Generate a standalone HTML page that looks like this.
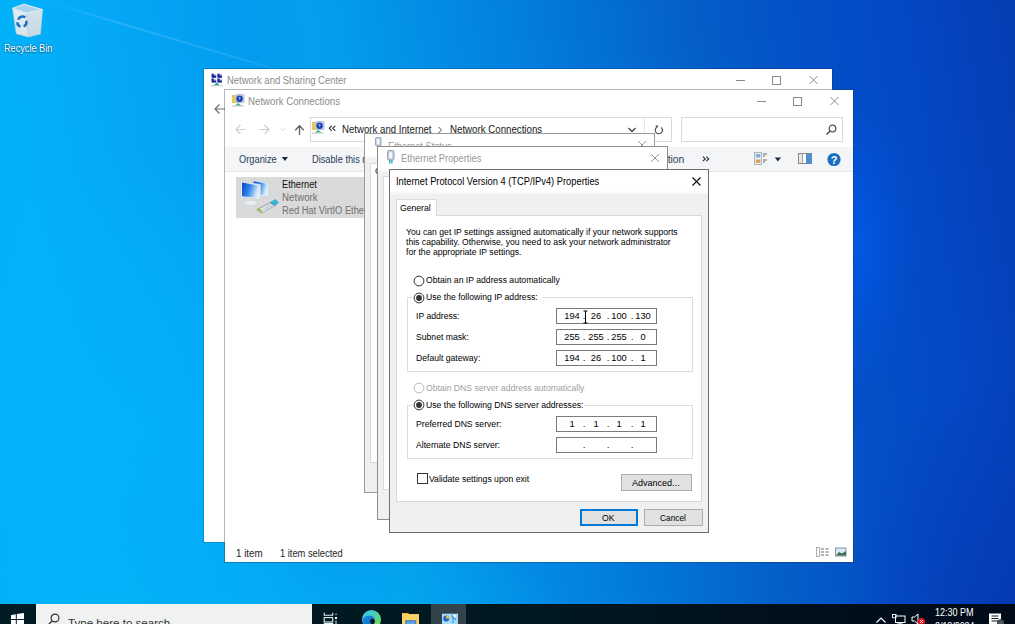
<!DOCTYPE html>
<html><head><meta charset="utf-8"><style>
html,body{margin:0;padding:0;}
body{width:1015px;height:624px;overflow:hidden;position:relative;background:radial-gradient(ellipse 200px 280px at 140px 430px, rgba(2,180,250,0.7) 0%, rgba(2,180,250,0.35) 60%, rgba(2,180,250,0) 100%),radial-gradient(ellipse 360px 110px at 220px 624px, rgba(4,178,246,0.75) 0%, rgba(4,178,246,0) 100%),radial-gradient(ellipse 180px 260px at 1015px 624px, rgba(4,52,170,0.7) 0%, rgba(4,52,170,0) 100%),radial-gradient(ellipse 70px 150px at 845px 245px, rgba(0,95,245,0.75) 0%, rgba(0,90,240,0.35) 50%, rgba(0,90,240,0) 100%),linear-gradient(81deg, #02b0f8 0%, #03b1f8 9%, #05aaf7 16%, #039bee 31%, #049fec 37%, #0281e0 54%, #045ec8 71%, #0450c8 80%, #0448c6 89%, #043fb6 98%);font-family:"Liberation Sans",sans-serif;}
.t{position:absolute;white-space:nowrap;line-height:1;transform-origin:0 0;}
svg{overflow:hidden}
</style></head><body>
<div style="position:absolute;left:45px;top:0px;width:300px;height:1.6px;transform-origin:0 0;transform:rotate(16.5deg);background:linear-gradient(90deg, rgba(255,255,255,0) 0%, rgba(255,255,255,0.13) 25%, rgba(255,255,255,0.10) 70%, rgba(255,255,255,0) 100%);"></div>
<svg style="position:absolute;left:8px;top:0px;" width="40" height="40" viewBox="0 0 40 40">
<defs><linearGradient id="rbl" x1="0" y1="0" x2="0" y2="1"><stop offset="0" stop-color="#e3eef3"/><stop offset="0.75" stop-color="#d9e7ee"/><stop offset="1" stop-color="#e6dde3"/></linearGradient>
<linearGradient id="rbr" x1="0" y1="0" x2="0" y2="1"><stop offset="0" stop-color="#d3e2ea"/><stop offset="1" stop-color="#c8d9e2"/></linearGradient></defs>
<path d="M4.5 8.3 L18.6 13.1 L20.5 36.9 L8.3 33.7Z" fill="url(#rbl)" stroke="#b9d3df" stroke-width="0.6"/>
<path d="M18.6 13.1 L34.6 9.6 L32.4 34 L20.5 36.9Z" fill="url(#rbr)" stroke="#b9d3df" stroke-width="0.6"/>
<path d="M4.5 8.3 L16 4.2 L34.6 9.6 L18.6 13.1Z" fill="#a9d2ea" stroke="#e2f1f8" stroke-width="1"/>
<g fill="none" stroke="#1f6fc6" stroke-width="2.6">
<path d="M10.2 19.6 A4.6 4.6 0 0 1 17.2 17.4"/><path d="M18.2 20.8 A4.6 4.6 0 0 1 15.6 26.4"/><path d="M12.4 26.6 A4.6 4.6 0 0 1 9.4 22.2"/>
</g></svg>
<div class="t" style="left:3.6999999999999997px;top:43px;font-size:10.5px;color:#fff;transform:scaleX(0.8722);text-shadow:0 0 2px rgba(0,0,0,.5),0 1px 1px rgba(0,0,0,.3);">Recycle Bin</div>
<div style="position:absolute;left:203px;top:68px;width:630px;height:475px;box-sizing:border-box;background:#fff;background-clip:padding-box;border:1px solid rgba(0,30,70,0.22);"></div>
<div class="t" style="left:227.4px;top:76px;font-size:10px;color:#8c8c8c;transform:scaleX(0.9471);">Network and Sharing Center</div>
<svg style="position:absolute;left:211px;top:73px;" width="13" height="14" viewBox="0 0 13 14">
<g><rect x="0.6" y="0.8" width="4.6" height="4" fill="#c9cff0"/><path d="M0.6 0.8 H2.8 V2.6 H5.2 V4.8 H0.6Z" fill="#1a2490"/></g>
<g><rect x="6.4" y="0.8" width="4.6" height="4" fill="#c9cff0"/><path d="M6.4 0.8 H8.6 V2.6 H11 V4.8 H6.4Z" fill="#1a2490"/></g>
<g><rect x="0.6" y="5.6" width="4.6" height="4" fill="#c9cff0"/><path d="M0.6 5.6 H2.8 V7.4 H5.2 V9.6 H0.6Z" fill="#1a2490"/></g>
<g><rect x="6.4" y="5.6" width="4.6" height="4" fill="#c9cff0"/><path d="M6.4 5.6 H8.6 V7.4 H11 V9.6 H6.4Z" fill="#1a2490"/></g>
<path d="M5 9.8 L6.6 9.8 L6.6 10.6 L9.2 12.3 L2.4 12.3 L5 10.6Z" fill="#1fb07a"/>
<rect x="0" y="12.2" width="12" height="1" fill="#c4c4c4"/></svg>
<svg style="position:absolute;left:213px;top:103px;" width="12" height="12" viewBox="0 0 12 12"><path d="M2 6 H12 M6.5 1.5 L2 6 L6.5 10.5" fill="none" stroke="#6f6f6f" stroke-width="1.2"/></svg>
<div style="position:absolute;left:224px;top:89px;width:630px;height:474px;box-sizing:border-box;background:#fff;background-clip:padding-box;border:1px solid rgba(40,40,40,0.34);"></div>
<div class="t" style="left:248.4px;top:97px;font-size:10px;color:#8c8c8c;transform:scaleX(0.9681);">Network Connections</div>
<svg style="position:absolute;left:231px;top:94px;" width="14" height="13" viewBox="0 0 14 13">
<rect x="1" y="1" width="6" height="8" fill="#f2d77c"/><rect x="1" y="1" width="3" height="8" fill="#e8c65a"/>
<rect x="5" y="0.5" width="8" height="8" rx="1" fill="#c9d6ee" stroke="#8aa0c8" stroke-width="0.6"/>
<circle cx="8.6" cy="4.8" r="3.2" fill="#1c3ea6"/><path d="M7.2 3 Q9 2.2 10 4 Q8.5 4.5 9 6.5 Q7.5 6 7.2 3Z" fill="#6fa0f0"/>
<path d="M6.5 9.2 L8 9.2 L8 10 L11 11.6 L3.5 11.6 L6.5 10Z" fill="#1fa86a"/>
<rect x="1" y="11.6" width="12" height="0.9" fill="#c0c0c0"/></svg>
<svg style="position:absolute;left:733px;top:74px;" width="90" height="12" viewBox="0 0 90 12"><path d="M3 6.5 H12" stroke="#8a8a8a" stroke-width="1"/>
<rect x="39.5" y="2.5" width="8" height="8" fill="none" stroke="#8a8a8a" stroke-width="1"/>
<path d="M76.5 2 L84.5 10 M84.5 2 L76.5 10" stroke="#8a8a8a" stroke-width="1"/></svg>
<svg style="position:absolute;left:754px;top:95px;" width="90" height="12" viewBox="0 0 90 12"><path d="M3 6.5 H12" stroke="#8a8a8a" stroke-width="1"/>
<rect x="39.5" y="2.5" width="8" height="8" fill="none" stroke="#8a8a8a" stroke-width="1"/>
<path d="M76.5 2 L84.5 10 M84.5 2 L76.5 10" stroke="#8a8a8a" stroke-width="1"/></svg>
<svg style="position:absolute;left:234px;top:123px;" width="74" height="14" viewBox="0 0 74 14">
<path d="M2 6.5 H11.5 M6.5 2 L2 6.5 L6.5 11" fill="none" stroke="#cfcfcf" stroke-width="1.2"/>
<path d="M25.5 6.5 H35 M30.5 2 L35 6.5 L30.5 11" fill="none" stroke="#cfcfcf" stroke-width="1.2"/>
<path d="M46.5 5.5 L49 7.5 L51.5 5.5" fill="none" stroke="#d8d8d8" stroke-width="1"/>
<path d="M65.5 12 V3 M61.2 7.2 L65.5 2.8 L69.8 7.2" fill="none" stroke="#5f5f5f" stroke-width="1.3"/></svg>
<div style="position:absolute;left:310px;top:117px;width:362px;height:25px;box-sizing:border-box;border:1px solid #dadada;"></div>
<div style="position:absolute;left:644px;top:118px;width:1px;height:23px;box-sizing:border-box;background:#e6e6e6;"></div>
<svg style="position:absolute;left:311px;top:121px;" width="14" height="14" viewBox="0 0 14 14">
<rect x="1" y="1" width="6" height="8" fill="#f2d77c"/><rect x="1" y="1" width="3" height="8" fill="#e8c65a"/>
<rect x="5" y="0.5" width="8" height="8" rx="1" fill="#c9d6ee" stroke="#8aa0c8" stroke-width="0.6"/>
<circle cx="8.6" cy="4.8" r="3.2" fill="#1c3ea6"/><path d="M7.2 3 Q9 2.2 10 4 Q8.5 4.5 9 6.5 Q7.5 6 7.2 3Z" fill="#6fa0f0"/>
<path d="M6.5 9.2 L8 9.2 L8 10 L11 11.6 L3.5 11.6 L6.5 10Z" fill="#1fa86a"/>
<rect x="1" y="11.6" width="12" height="0.9" fill="#c0c0c0"/></svg>
<svg style="position:absolute;left:328px;top:125px;" width="9" height="7" viewBox="0 0 9 7"><path d="M3.8 0.8 L1.3 3.3 L3.8 5.8 M7.3 0.8 L4.8 3.3 L7.3 5.8" fill="none" stroke="#2a2a2a" stroke-width="1.1"/></svg>
<div class="t" style="left:341.59999999999997px;top:124px;font-size:10.5px;color:#1a1a1a;transform:scaleX(0.9186);">Network and Internet</div>
<svg style="position:absolute;left:436px;top:126px;" width="8" height="8" viewBox="0 0 8 8"><path d="M2.5 1 L5.5 4 L2.5 7" fill="none" stroke="#555" stroke-width="1"/></svg>
<div class="t" style="left:450.0px;top:124px;font-size:10.5px;color:#1a1a1a;transform:scaleX(0.9232);">Network Connections</div>
<svg style="position:absolute;left:627px;top:126px;" width="10" height="8" viewBox="0 0 10 8"><path d="M1.5 2 L5 5.5 L8.5 2" fill="none" stroke="#444" stroke-width="1.3"/></svg>
<svg style="position:absolute;left:654px;top:125px;" width="10" height="10" viewBox="0 0 10 10"><path d="M7.2 2.4 A3.6 3.6 0 1 1 2.6 2.3" fill="none" stroke="#555" stroke-width="1.2"/><path d="M1.5 0.3 L4.6 0.8 L2.8 3.6Z" fill="#555"/></svg>
<div style="position:absolute;left:681px;top:117px;width:162px;height:25px;box-sizing:border-box;border:1px solid #dadada;"></div>
<svg style="position:absolute;left:824px;top:123px;" width="14" height="14" viewBox="0 0 14 14"><circle cx="8.5" cy="5.5" r="3.3" fill="none" stroke="#555" stroke-width="1.3"/><path d="M6 8 L2.5 11.5" stroke="#555" stroke-width="1.6"/></svg>
<div style="position:absolute;left:225px;top:147px;width:628px;height:25px;box-sizing:border-box;background:#f3f5f7;border-bottom:1px solid #e8ebee;"></div>
<div class="t" style="left:239.4px;top:154px;font-size:10.5px;color:#2c3b56;transform:scaleX(0.8857);">Organize</div>
<svg style="position:absolute;left:281px;top:156px;" width="8" height="6" viewBox="0 0 8 6"><path d="M0.8 1 L7 1 L3.9 5Z" fill="#1e2a44"/></svg>
<div class="t" style="left:312.4px;top:154px;font-size:10.5px;color:#2c3b56;transform:scaleX(0.88);">Disable this network device</div>
<div class="t" style="left:569.4px;top:154px;font-size:10.5px;color:#2c3b56;transform:scaleX(0.9828);">Diagnose this connection</div>
<svg style="position:absolute;left:702px;top:156px;" width="8" height="6" viewBox="0 0 8 6"><path d="M0.9 0.6 L3.2 2.9 L0.9 5.2 M4.4 0.6 L6.7 2.9 L4.4 5.2" fill="none" stroke="#2a2f3a" stroke-width="1.2"/></svg>
<svg style="position:absolute;left:754px;top:152px;" width="14" height="14" viewBox="0 0 14 14"><rect x="0.5" y="0.5" width="7" height="12" fill="#eef2f5" stroke="#9aa2a8" stroke-width="0.8"/>
<rect x="1.8" y="2" width="4.5" height="3.5" fill="#7fb2d8"/><rect x="1.8" y="7.5" width="4.5" height="3.5" fill="#d9a35a"/>
<path d="M9 2 H13 M9 4 H11 M9 8 H13 M9 10 H11" stroke="#555" stroke-width="0.9"/></svg>
<svg style="position:absolute;left:774px;top:157px;" width="8" height="5" viewBox="0 0 8 5"><path d="M0.8 0.5 L7 0.5 L3.9 4.5Z" fill="#1e2a44"/></svg>
<svg style="position:absolute;left:798px;top:153px;" width="15" height="12" viewBox="0 0 15 12"><rect x="0.5" y="0.5" width="13" height="10" fill="#fff" stroke="#888" stroke-width="1"/>
<rect x="1" y="1" width="3" height="9" fill="#e8e8e8"/><rect x="8" y="1" width="5.5" height="9.5" fill="#4a90d9"/><path d="M4.5 1 V10" stroke="#888" stroke-width="0.8"/></svg>
<svg style="position:absolute;left:827px;top:152px;" width="15" height="15" viewBox="0 0 15 15"><circle cx="7" cy="7.5" r="6.6" fill="#1a6fc0"/><text x="7" y="11.6" text-anchor="middle" font-family="Liberation Sans" font-weight="bold" font-size="11" fill="#fff">?</text></svg>
<div style="position:absolute;left:236px;top:177px;width:140px;height:41px;box-sizing:border-box;background:#dadada;"></div>
<svg style="position:absolute;left:239px;top:178px;" width="40" height="38" viewBox="0 0 40 38">
<defs><linearGradient id="sc" x1="0" x2="1" y1="0" y2="0.3"><stop offset="0" stop-color="#0a3fc4"/><stop offset="0.5" stop-color="#2f86ea"/><stop offset="1" stop-color="#d6ecfc"/></linearGradient>
<linearGradient id="pl" x1="0" x2="1" y1="1" y2="0"><stop offset="0" stop-color="#f4f6f7"/><stop offset="1" stop-color="#c9d2d8"/></linearGradient></defs>
<path d="M13 1.5 L30 4.5 L30 19 L13 17Z" fill="#e6ebef" stroke="#c0c9d0" stroke-width="0.6"/>
<path d="M14.5 3.2 L28.5 5.8 L28.5 17.5 L14.5 15.8Z" fill="url(#sc)"/>
<path d="M1.5 3 L21.5 6.5 L21.5 21.5 L1.5 19.5Z" fill="#e9eef1" stroke="#c3ccd3" stroke-width="0.6"/>
<path d="M3 4.6 L20 7.6 L20 20 L3 18.2Z" fill="url(#sc)"/>
<path d="M9 21 L14 21.5 L15 24 L8 23.5Z" fill="#dfe4e7"/>
<ellipse cx="11.5" cy="25" rx="7" ry="2.6" fill="#e9edef" stroke="#c9cfd3" stroke-width="0.6"/>
<path d="M17.5 31.5 L31 24.5 L36 27.5 L22.5 35Z" fill="url(#pl)" stroke="#8e99a0" stroke-width="0.7"/>
<path d="M20 31 L30 25.8 M22 32.8 L32.5 27.2" stroke="#a9b3b9" stroke-width="0.6"/>
<path d="M31 24.5 L36.5 21.5 L39.5 24.5 L36 27.5Z" fill="#35b4dc" stroke="#2a8fb5" stroke-width="0.5"/>
<path d="M17.5 31.5 L20.5 30 L23.5 33.8 L22.5 35Z" fill="#9cc34f"/></svg>
<div class="t" style="left:282.29999999999995px;top:180px;font-size:10px;color:#111;transform:scaleX(0.9216);">Ethernet</div>
<div class="t" style="left:282.29999999999995px;top:193px;font-size:10px;color:#707070;transform:scaleX(0.9722);">Network</div>
<div class="t" style="left:282.29999999999995px;top:206px;font-size:10px;color:#707070;transform:scaleX(0.93);">Red Hat VirtIO Ethernet Adapter</div>
<div class="t" style="left:236.4px;top:548px;font-size:10.5px;color:#1e1e1e;transform:scaleX(0.9329);">1 item</div>
<div class="t" style="left:280.4px;top:548px;font-size:10.5px;color:#1e1e1e;transform:scaleX(0.887);">1 item selected</div>
<svg style="position:absolute;left:815px;top:546px;" width="32" height="12" viewBox="0 0 32 12"><rect x="1.5" y="1.5" width="3" height="9" fill="none" stroke="#999" stroke-width="0.8"/>
<path d="M6 3 H9 M10.5 3 H13.5 M6 6 H9 M10.5 6 H13.5 M6 9 H9 M10.5 9 H13.5" stroke="#666" stroke-width="1"/>
<rect x="20.5" y="2" width="10.5" height="8" fill="#d8e8f6" stroke="#7a8ea0" stroke-width="0.9"/>
<path d="M21 9.5 L24 6 L27 7.5 L31 5 V9.5Z" fill="#3f6f50"/></svg>
<div style="position:absolute;left:364px;top:133px;width:291px;height:360px;box-sizing:border-box;background:#f0f0f0;border:1px solid #9a9a9a;"></div>
<div style="position:absolute;left:365px;top:134px;width:289px;height:25px;box-sizing:border-box;background:linear-gradient(#fff 0, #fff 22px, #f0f0f0 100%);"></div>
<div style="position:absolute;left:370px;top:179px;width:279px;height:284px;box-sizing:border-box;background:#fff;border:1px solid #d9d9d9;"></div>
<div style="position:absolute;left:370px;top:163px;width:42px;height:17px;box-sizing:border-box;background:#fff;border:1px solid #d9d9d9;border-bottom:none;"></div>
<div class="t" style="left:375.4px;top:166px;font-size:9.6px;color:#000;transform:scaleX(0.9);">General</div>
<svg style="position:absolute;left:374px;top:137px;" width="9" height="12" viewBox="0 0 9 12"><rect x="1.5" y="0.5" width="5.5" height="8.5" rx="1.2" fill="#c8d4e0" stroke="#7f90a4" stroke-width="0.8"/><rect x="3.2" y="2" width="2" height="5" fill="#fff"/><rect x="3" y="9" width="3" height="3" fill="#3a8ab8"/></svg>
<div class="t" style="left:388.4px;top:141px;font-size:10.5px;color:#999;transform:scaleX(0.88);">Ethernet Status</div>
<svg style="position:absolute;left:637px;top:140px;" width="10" height="10" viewBox="0 0 10 10"><path d="M1 1 L9 9 M9 1 L1 9" stroke="#999" stroke-width="1"/></svg>
<div style="position:absolute;left:377px;top:146px;width:291px;height:374px;box-sizing:border-box;background:#f0f0f0;border:1px solid #8e8e8e;"></div>
<div style="position:absolute;left:378px;top:147px;width:289px;height:25px;box-sizing:border-box;background:linear-gradient(#fff 0, #fff 22px, #f0f0f0 100%);"></div>
<div style="position:absolute;left:383px;top:192px;width:279px;height:298px;box-sizing:border-box;background:#fff;border:1px solid #d9d9d9;"></div>
<div style="position:absolute;left:383px;top:176px;width:42px;height:17px;box-sizing:border-box;background:#fff;border:1px solid #d9d9d9;border-bottom:none;"></div>
<svg style="position:absolute;left:386px;top:150px;" width="10" height="14" viewBox="0 0 10 14"><rect x="1.5" y="0.5" width="6.5" height="9.5" rx="1.5" fill="#c8d4e0" stroke="#7f90a4" stroke-width="0.8"/><rect x="3.6" y="2.2" width="2.2" height="6" fill="#fff"/><rect x="3" y="10" width="1.4" height="3.5" fill="#29a9c8"/><rect x="5.2" y="10" width="1.4" height="3.5" fill="#29a9c8"/></svg>
<div class="t" style="left:400.79999999999995px;top:153px;font-size:10.5px;color:#999;transform:scaleX(0.8877);">Ethernet Properties</div>
<svg style="position:absolute;left:650px;top:153px;" width="10" height="10" viewBox="0 0 10 10"><path d="M1 1 L9 9 M9 1 L1 9" stroke="#999" stroke-width="1"/></svg>
<div style="position:absolute;left:389px;top:169px;width:320px;height:364px;box-sizing:border-box;background:#f0f0f0;border:1px solid #6e6e6e;"></div>
<div style="position:absolute;left:390px;top:170px;width:318px;height:25px;box-sizing:border-box;background:linear-gradient(#fff 0, #fff 21px, #f0f0f0 100%);"></div>
<div class="t" style="left:396.4px;top:176px;font-size:10.5px;color:#000;transform:scaleX(0.886);">Internet Protocol Version 4 (TCP/IPv4) Properties</div>
<svg style="position:absolute;left:691px;top:176px;" width="11" height="11" viewBox="0 0 11 11"><path d="M1.5 1.5 L9.5 9.5 M9.5 1.5 L1.5 9.5" stroke="#111" stroke-width="1.1"/></svg>
<div style="position:absolute;left:396px;top:215px;width:306px;height:287px;box-sizing:border-box;background:#fff;border:1px solid #d9d9d9;"></div>
<div style="position:absolute;left:396px;top:199px;width:41px;height:17px;box-sizing:border-box;background:#fff;border:1px solid #d9d9d9;border-bottom:none;"></div>
<div class="t" style="left:400.4px;top:203px;font-size:9.6px;color:#000;transform:scaleX(0.9);">General</div>
<div class="t" style="left:406.4px;top:227px;font-size:9.6px;color:#000;transform:scaleX(0.9);">You can get IP settings assigned automatically if your network supports</div>
<div class="t" style="left:406.4px;top:237px;font-size:9.6px;color:#000;transform:scaleX(0.9);">this capability. Otherwise, you need to ask your network administrator</div>
<div class="t" style="left:406.4px;top:247px;font-size:9.6px;color:#000;transform:scaleX(0.9);">for the appropriate IP settings.</div>
<div style="position:absolute;left:407px;top:297px;width:286px;height:75px;box-sizing:border-box;border:1px solid #dcdcdc;"></div>
<div style="position:absolute;left:407px;top:405px;width:286px;height:54px;box-sizing:border-box;border:1px solid #dcdcdc;"></div>
<div style="position:absolute;left:412px;top:292px;width:130px;height:10px;box-sizing:border-box;background:#fff;"></div>
<div style="position:absolute;left:412px;top:400px;width:172px;height:10px;box-sizing:border-box;background:#fff;"></div>
<svg style="position:absolute;left:413px;top:274.5px;" width="12" height="12" viewBox="0 0 12 12"><circle cx="6" cy="6" r="4.9" fill="#fff" stroke="#333" stroke-width="1"/></svg>
<svg style="position:absolute;left:413px;top:291.5px;" width="12" height="12" viewBox="0 0 12 12"><circle cx="6" cy="6" r="4.9" fill="#fff" stroke="#333" stroke-width="1"/><circle cx="6" cy="6" r="2.9" fill="#333"/></svg>
<svg style="position:absolute;left:413px;top:382px;" width="12" height="12" viewBox="0 0 12 12"><circle cx="6" cy="6" r="4.9" fill="#fff" stroke="#bcbcbc" stroke-width="1"/></svg>
<svg style="position:absolute;left:413px;top:399px;" width="12" height="12" viewBox="0 0 12 12"><circle cx="6" cy="6" r="4.9" fill="#fff" stroke="#333" stroke-width="1"/><circle cx="6" cy="6" r="2.9" fill="#333"/></svg>
<div class="t" style="left:426.4px;top:275px;font-size:9.6px;color:#000;transform:scaleX(0.9);">Obtain an IP address automatically</div>
<div class="t" style="left:426.4px;top:292px;font-size:9.6px;color:#000;transform:scaleX(0.9);">Use the following IP address:</div>
<div class="t" style="left:416.4px;top:311px;font-size:9.6px;color:#000;transform:scaleX(0.9);">IP address:</div>
<div class="t" style="left:416.4px;top:332px;font-size:9.6px;color:#000;transform:scaleX(0.9);">Subnet mask:</div>
<div class="t" style="left:416.4px;top:353px;font-size:9.6px;color:#000;transform:scaleX(0.9);">Default gateway:</div>
<div class="t" style="left:426.4px;top:383px;font-size:9.6px;color:#a0a0a0;transform:scaleX(0.9);">Obtain DNS server address automatically</div>
<div class="t" style="left:426.4px;top:400px;font-size:9.6px;color:#000;transform:scaleX(0.9);">Use the following DNS server addresses:</div>
<div class="t" style="left:416.4px;top:419px;font-size:9.6px;color:#000;transform:scaleX(0.9);">Preferred DNS server:</div>
<div class="t" style="left:416.4px;top:440px;font-size:9.6px;color:#000;transform:scaleX(0.9);">Alternate DNS server:</div>
<div style="position:absolute;left:417px;top:473px;width:11px;height:11px;box-sizing:border-box;background:#fff;border:1px solid #333;"></div>
<div class="t" style="left:429.4px;top:474px;font-size:9.6px;color:#000;transform:scaleX(0.9);">Validate settings upon exit</div>
<div style="position:absolute;left:556px;top:308px;width:101px;height:16px;box-sizing:border-box;background:#fff;border:1px solid #7a7a7a;"></div>
<div class="t" style="left:557.2px;width:30px;text-align:center;top:311px;font-size:9.6px;transform-origin:50% 0;transform:scaleX(0.97)">194</div>
<div class="t" style="left:582.8000000000001px;top:311px;font-size:9.6px;">.</div>
<div class="t" style="left:580.8000000000001px;width:30px;text-align:center;top:311px;font-size:9.6px;transform-origin:50% 0;transform:scaleX(0.97)">26</div>
<div class="t" style="left:606.8000000000001px;top:311px;font-size:9.6px;">.</div>
<div class="t" style="left:604.2px;width:30px;text-align:center;top:311px;font-size:9.6px;transform-origin:50% 0;transform:scaleX(0.97)">100</div>
<div class="t" style="left:630.8000000000001px;top:311px;font-size:9.6px;">.</div>
<div class="t" style="left:628.0px;width:30px;text-align:center;top:311px;font-size:9.6px;transform-origin:50% 0;transform:scaleX(0.97)">130</div>
<div style="position:absolute;left:556px;top:329px;width:101px;height:16px;box-sizing:border-box;background:#fff;border:1px solid #7a7a7a;"></div>
<div class="t" style="left:557.2px;width:30px;text-align:center;top:332px;font-size:9.6px;transform-origin:50% 0;transform:scaleX(0.97)">255</div>
<div class="t" style="left:582.8000000000001px;top:332px;font-size:9.6px;">.</div>
<div class="t" style="left:580.8000000000001px;width:30px;text-align:center;top:332px;font-size:9.6px;transform-origin:50% 0;transform:scaleX(0.97)">255</div>
<div class="t" style="left:606.8000000000001px;top:332px;font-size:9.6px;">.</div>
<div class="t" style="left:604.2px;width:30px;text-align:center;top:332px;font-size:9.6px;transform-origin:50% 0;transform:scaleX(0.97)">255</div>
<div class="t" style="left:630.8000000000001px;top:332px;font-size:9.6px;">.</div>
<div class="t" style="left:628.0px;width:30px;text-align:center;top:332px;font-size:9.6px;transform-origin:50% 0;transform:scaleX(0.97)">0</div>
<div style="position:absolute;left:556px;top:350px;width:101px;height:16px;box-sizing:border-box;background:#fff;border:1px solid #7a7a7a;"></div>
<div class="t" style="left:557.2px;width:30px;text-align:center;top:353px;font-size:9.6px;transform-origin:50% 0;transform:scaleX(0.97)">194</div>
<div class="t" style="left:582.8000000000001px;top:353px;font-size:9.6px;">.</div>
<div class="t" style="left:580.8000000000001px;width:30px;text-align:center;top:353px;font-size:9.6px;transform-origin:50% 0;transform:scaleX(0.97)">26</div>
<div class="t" style="left:606.8000000000001px;top:353px;font-size:9.6px;">.</div>
<div class="t" style="left:604.2px;width:30px;text-align:center;top:353px;font-size:9.6px;transform-origin:50% 0;transform:scaleX(0.97)">100</div>
<div class="t" style="left:630.8000000000001px;top:353px;font-size:9.6px;">.</div>
<div class="t" style="left:628.0px;width:30px;text-align:center;top:353px;font-size:9.6px;transform-origin:50% 0;transform:scaleX(0.97)">1</div>
<div style="position:absolute;left:556px;top:416px;width:101px;height:16px;box-sizing:border-box;background:#fff;border:1px solid #7a7a7a;"></div>
<div class="t" style="left:557.2px;width:30px;text-align:center;top:419px;font-size:9.6px;transform-origin:50% 0;transform:scaleX(0.97)">1</div>
<div class="t" style="left:582.8000000000001px;top:419px;font-size:9.6px;">.</div>
<div class="t" style="left:580.8000000000001px;width:30px;text-align:center;top:419px;font-size:9.6px;transform-origin:50% 0;transform:scaleX(0.97)">1</div>
<div class="t" style="left:606.8000000000001px;top:419px;font-size:9.6px;">.</div>
<div class="t" style="left:604.2px;width:30px;text-align:center;top:419px;font-size:9.6px;transform-origin:50% 0;transform:scaleX(0.97)">1</div>
<div class="t" style="left:630.8000000000001px;top:419px;font-size:9.6px;">.</div>
<div class="t" style="left:628.0px;width:30px;text-align:center;top:419px;font-size:9.6px;transform-origin:50% 0;transform:scaleX(0.97)">1</div>
<div style="position:absolute;left:556px;top:437px;width:101px;height:16px;box-sizing:border-box;background:#fff;border:1px solid #7a7a7a;"></div>
<div class="t" style="left:582.8000000000001px;top:440px;font-size:9.6px;">.</div>
<div class="t" style="left:606.8000000000001px;top:440px;font-size:9.6px;">.</div>
<div class="t" style="left:630.8000000000001px;top:440px;font-size:9.6px;">.</div>
<svg style="position:absolute;left:582px;top:310px;" width="7" height="14" viewBox="0 0 7 14"><path d="M1.5 1 H5.5 M3.5 1 V13 M1.5 13 H5.5" stroke="#000" stroke-width="1"/></svg>
<div style="position:absolute;left:621px;top:474px;width:71px;height:17px;box-sizing:border-box;background:#e1e1e1;border:1px solid #adadad;"></div>
<div class="t" style="left:631.6999999999999px;top:478px;font-size:9.6px;color:#000;transform:scaleX(0.94);">Advanced...</div>
<div style="position:absolute;left:580px;top:509px;width:58px;height:17px;box-sizing:border-box;background:#e1e1e1;border:1px solid #0078d7;box-shadow:inset 0 0 0 1px #0078d7;"></div>
<div class="t" style="left:601.6999999999999px;top:513px;font-size:9.6px;color:#000;transform:scaleX(0.9);">OK</div>
<div style="position:absolute;left:644px;top:509px;width:59px;height:17px;box-sizing:border-box;background:#e1e1e1;border:1px solid #adadad;"></div>
<div class="t" style="left:659.5px;top:513px;font-size:9.6px;color:#000;transform:scaleX(0.869);">Cancel</div>
<div style="position:absolute;left:0px;top:604px;width:1015px;height:20px;box-sizing:border-box;background:linear-gradient(90deg, #011c25 0%, #01171f 55%, #000e1b 83%, #000b19 100%);"></div>
<div style="position:absolute;left:36px;top:604px;width:276px;height:20px;box-sizing:border-box;background:#f0f1f1;"></div>
<svg style="position:absolute;left:11px;top:613px;" width="14" height="11" viewBox="0 0 14 11"><path d="M0 1.9 L4.8 1.2 V5.9 H0Z M5.8 1.05 L13 0 V5.9 H5.8Z M0 6.9 H4.8 V11 H0Z M5.8 6.9 H13 V11 H5.8Z" fill="#fff"/></svg>
<svg style="position:absolute;left:47px;top:613px;" width="14" height="11" viewBox="0 0 14 11"><circle cx="8" cy="5" r="3.9" fill="none" stroke="#333" stroke-width="1.2"/><path d="M5.3 7.8 L1.5 11.6" stroke="#333" stroke-width="1.3"/></svg>
<div class="t" style="left:68.4px;top:618px;font-size:11.5px;color:#333;transform:scaleX(1.0063);">Type here to search</div>
<svg style="position:absolute;left:323px;top:612px;" width="16" height="12" viewBox="0 0 16 12"><path d="M1.2 0.8 V3.3 H9.7 V0.8" fill="none" stroke="#e6eef0" stroke-width="1.1"/><rect x="1.2" y="5.6" width="8.5" height="4.4" fill="none" stroke="#e6eef0" stroke-width="1.1"/><rect x="0.7" y="11" width="9.5" height="2" fill="#e6eef0"/><rect x="12" y="1.5" width="2" height="1.6" fill="#6f8088"/><rect x="12" y="5" width="2" height="2" fill="#fff"/><rect x="12" y="8.5" width="2" height="4" fill="#6f8088"/></svg>
<svg style="position:absolute;left:361px;top:609px;" width="22" height="15" viewBox="0 0 22 15"><defs><linearGradient id="eg" x1="0" y1="0" x2="1" y2="0.6"><stop offset="0" stop-color="#38c4f0"/><stop offset="0.55" stop-color="#43cdbd"/><stop offset="1" stop-color="#6fdc5a"/></linearGradient>
<linearGradient id="eb" x1="0" y1="0" x2="1" y2="1"><stop offset="0" stop-color="#1e8ee6"/><stop offset="1" stop-color="#0d5fc0"/></linearGradient></defs>
<circle cx="10.5" cy="10.5" r="9.5" fill="url(#eg)"/>
<path d="M1.2 12 Q2.5 6.5 8.5 6.5 Q13 6.8 14 11 Q11 8.5 9.5 11.5 Q8.5 14.5 11 16 L11 20 Q3 20 1.2 12Z" fill="url(#eb)"/>
<ellipse cx="11.5" cy="12.5" rx="2.3" ry="2.8" fill="#01171f"/></svg>
<svg style="position:absolute;left:401px;top:612px;" width="19" height="12" viewBox="0 0 19 12"><path d="M1 1 H7 L8.2 2 H18 V12 H1Z" fill="#e9b642"/><rect x="1" y="2.2" width="17" height="10" fill="#f9d266"/><rect x="4.8" y="8.8" width="10" height="4" fill="#5fa6e6" stroke="#2a68c0" stroke-width="0.9"/></svg>
<div style="position:absolute;left:431px;top:604px;width:35px;height:20px;box-sizing:border-box;background:#33434c;"></div>
<svg style="position:absolute;left:441px;top:613px;" width="17" height="11" viewBox="0 0 17 11"><rect x="1" y="0.7" width="16" height="11" fill="#a6dbf7"/><circle cx="5.2" cy="5.6" r="3" fill="#1f66c0"/><path d="M5.2 5.6 V2.6 A3 3 0 0 1 8.2 5.6Z" fill="#f5c23a"/><path d="M10.5 2.5 L13 5 M11.2 6 H15 M12 7.5 V10" stroke="#2f7fd0" stroke-width="1.1"/><circle cx="13.5" cy="3" r="1.2" fill="#fff"/></svg>
<svg style="position:absolute;left:875px;top:616px;" width="12" height="8" viewBox="0 0 12 8"><path d="M1.5 6.5 L6 2 L10.5 6.5" fill="none" stroke="#fff" stroke-width="1.1"/></svg>
<svg style="position:absolute;left:892px;top:614px;" width="15" height="10" viewBox="0 0 15 10"><rect x="0.5" y="0.5" width="3.5" height="3.2" fill="none" stroke="#fff" stroke-width="0.9"/><rect x="3.5" y="2" width="9.5" height="6.5" fill="none" stroke="#fff" stroke-width="1"/><path d="M8 8.5 V10 M5 10 H11" stroke="#fff" stroke-width="1"/></svg>
<svg style="position:absolute;left:911px;top:613px;" width="16" height="11" viewBox="0 0 16 11"><path d="M1 4 H3.5 L7 1 V11 L3.5 8 H1Z" fill="none" stroke="#fff" stroke-width="1"/><circle cx="10.5" cy="8.5" r="3.6" fill="#e81123"/><path d="M9 7 L12 10 M12 7 L9 10" stroke="#fff" stroke-width="0.9"/></svg>
<div class="t" style="left:935.0px;top:608px;font-size:10.2px;color:#fff;transform:scaleX(0.8835);">12:30 PM</div>
<div class="t" style="left:935.4px;top:622px;font-size:10.2px;color:#fff;transform:scaleX(0.87);">2/18/2024</div>
<svg style="position:absolute;left:988px;top:613px;" width="16" height="11" viewBox="0 0 16 11"><path d="M1 0.5 H13 V11 H1Z" fill="#fff"/><path d="M3.5 3 H10.5 M3.5 5.5 H10.5 M3.5 8 H10.5" stroke="#0d1a24" stroke-width="1"/><circle cx="13" cy="10" r="3.5" fill="#555" stroke="#0d1a24" stroke-width="0.8"/></svg>
</body></html>
